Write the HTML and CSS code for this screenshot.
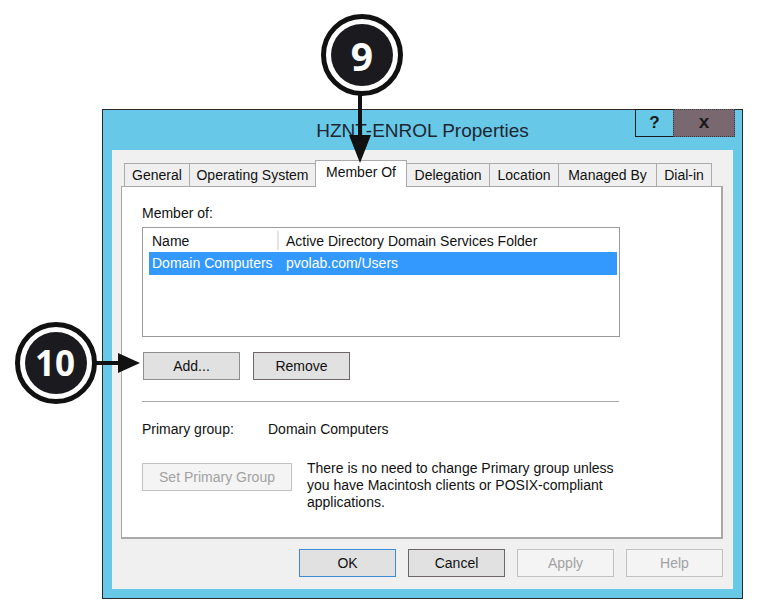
FILE: index.html
```html
<!DOCTYPE html>
<html>
<head>
<meta charset="utf-8">
<link rel="stylesheet" href="styles.css">
</head>
<body>
<div class="stage">
  <div class="window">
    <div class="titlebar">
      <div class="title">HZNT-ENROL Properties</div>
      <div class="caption-btns">
        <div class="cbtn help">?</div>
        <div class="cbtn close">x</div>
      </div>
    </div>
    <div class="client">
      <div class="tabs">
        <div class="tab w-general">General</div>
        <div class="tab w-os">Operating System</div>
        <div class="tab selected w-member">Member Of</div>
        <div class="tab w-deleg">Delegation</div>
        <div class="tab w-loc">Location</div>
        <div class="tab w-managed">Managed By</div>
        <div class="tab w-dial">Dial-in</div>
      </div>
      <div class="panel">
        <div class="label">Member of:</div>
        <div class="listbox">
          <div class="lrow header">
            <span class="hc1">Name</span><span class="hdiv"></span><span class="hc2">Active Directory Domain Services Folder</span>
          </div>
          <div class="lrow selrow">
            <span class="sc1">Domain Computers</span><span class="sc2">pvolab.com/Users</span>
          </div>
        </div>
        <div class="btnrow">
          <div class="btn add">Add...</div>
          <div class="btn dark">Remove</div>
        </div>
        <div class="sep"></div>
        <div class="pg"><span class="pg-label">Primary group:</span><span>Domain Computers</span></div>
        <div class="setrow">
          <div class="btn disabled setbtn">Set Primary Group</div>
          <p class="note">There is no need to change Primary group unless<br>you have Macintosh clients or POSIX-compliant<br>applications.</p>
        </div>
      </div>
      <div class="footer">
        <div class="btn fbtn default">OK</div>
        <div class="btn fbtn dark">Cancel</div>
        <div class="btn fbtn disabled">Apply</div>
        <div class="btn fbtn disabled">Help</div>
      </div>
    </div>
  </div>
  <svg class="callouts" width="760" height="610" viewBox="0 0 760 610">
    <line x1="360" y1="94" x2="360" y2="140" stroke="#111" stroke-width="4"/>
    <polygon points="349,135 371,135 360,163" fill="#111"/>
    <circle cx="362" cy="55" r="38.5" fill="#fff" stroke="#111" stroke-width="5"/>
    <circle cx="362" cy="55" r="31" fill="#1b1b1f"/>
    <text x="362" y="71" class="cnum" font-size="39">9</text>

    <line x1="95" y1="363" x2="122" y2="363" stroke="#111" stroke-width="4"/>
    <polygon points="118,353 118,373 140,363" fill="#111"/>
    <circle cx="56" cy="363" r="38.5" fill="#fff" stroke="#111" stroke-width="5"/>
    <circle cx="56" cy="363" r="31" fill="#1b1b1f"/>
    <text x="55" y="376" class="cnum" font-size="35">10</text>
  </svg>
</div>
</body>
</html>
```

FILE: styles.css
```css
html, body {
  margin: 0;
  padding: 0;
  background: #ffffff;
}

body {
  font-family: "Liberation Sans", Arial, sans-serif;
  font-size: 14px;
  color: #111;
}

.stage {
  position: relative;
  width: 760px;
  height: 610px;
  box-sizing: border-box;
  padding: 109px 0 0 102px;
  overflow: hidden;
}

.window {
  width: 641px;
  height: 490px;
  box-sizing: border-box;
  border: 1px solid #2a2a2a;
  background: #67c8e8;
  display: flex;
  flex-direction: column;
}

.titlebar {
  position: relative;
  height: 40px;
  display: flex;
  align-items: center;
  justify-content: center;
  flex: none;
}

.title {
  font-size: 19px;
  color: #1f2630;
  padding-top: 2px;
}

.caption-btns {
  position: absolute;
  top: -1px;
  right: 7px;
  display: flex;
}

.cbtn {
  height: 28px;
  box-sizing: border-box;
  display: flex;
  align-items: center;
  justify-content: center;
  font-weight: bold;
  color: #1a1a1a;
}

.help {
  width: 38px;
  border: 1px solid #1c1c1c;
  border-right: none;
  font-size: 17px;
}

.close {
  width: 62px;
  background: #7a6870;
  border: 1px dotted #3a3a3a;
  font-size: 19px;
  padding-bottom: 3px;
}

.client {
  flex: 1;
  margin: 0 9px 9px 9px;
  background: #f0f0f0;
  padding: 10px 10px 11px 9px;
  display: flex;
  flex-direction: column;
}

.tabs {
  height: 26px;
  display: flex;
  align-items: flex-end;
  padding-left: 3px;
  flex: none;
  position: relative;
  z-index: 3;
}

.tab {
  height: 23px;
  box-sizing: border-box;
  border: 1px solid #ababab;
  border-bottom: none;
  margin-right: -1px;
  background: #efefef;
  display: flex;
  align-items: center;
  justify-content: center;
  white-space: nowrap;
  padding-bottom: 1px;
}

.tab.selected {
  height: 27px;
  margin-bottom: -1px;
  background: #ffffff;
  position: relative;
  z-index: 4;
  padding-bottom: 5px;
}

.w-general { width: 66px; }
.w-os { width: 127px; }
.w-member { width: 92px; }
.w-deleg { width: 84px; }
.w-loc { width: 70px; }
.w-managed { width: 99px; }
.w-dial { width: 56px; }

.panel {
  height: 353px;
  box-sizing: border-box;
  background: #ffffff;
  border-style: solid;
  border-color: #a8a8a8;
  border-width: 1px 2px 2px 1px;
  padding: 18px 0 0 20px;
  position: relative;
  z-index: 1;
  flex: none;
}

.label {
  line-height: 17px;
}

.listbox {
  margin-top: 5px;
  width: 478px;
  height: 110px;
  box-sizing: border-box;
  border: 1px solid #9a9a9a;
  background: #fff;
}

.lrow {
  display: flex;
  white-space: nowrap;
}

.header {
  height: 24px;
  line-height: 26px;
  align-items: stretch;
}

.hc1 {
  width: 125px;
  padding-left: 9px;
}

.hdiv {
  width: 2px;
  margin: 3px 0 2px 0;
  background: #e4e4e4;
}

.hc2 {
  padding-left: 7px;
}

.selrow {
  margin-left: 6px;
  width: 468px;
  height: 23px;
  line-height: 23px;
  background: #3399ff;
  color: #ffffff;
}

.sc1 {
  width: 134px;
  padding-left: 3px;
}

.btnrow {
  margin-top: 15px;
  padding-left: 1px;
  display: flex;
  gap: 13px;
}

.btn {
  height: 28px;
  box-sizing: border-box;
  border: 1px solid #8e8e8e;
  background: #e1e1e1;
  display: flex;
  align-items: center;
  justify-content: center;
  white-space: nowrap;
  color: #111;
}

.add { width: 97px; }
.btnrow .dark { width: 97px; }

.dark {
  border-color: #6f666b;
}

.default {
  border-color: #3d8bd6;
}

.disabled {
  background: #f4f4f4;
  border-color: #c2c2c2;
  color: #a2a2a2;
}

.sep {
  margin-top: 21px;
  width: 477px;
  height: 1px;
  background: #a6a6a6;
}

.pg {
  margin-top: 19px;
  line-height: 17px;
  display: flex;
}

.pg-label {
  width: 126px;
}

.setrow {
  margin-top: 22px;
  display: flex;
  align-items: flex-start;
}

.setbtn {
  width: 150px;
  margin-top: 3px;
}

.note {
  margin: 0 0 0 15px;
  line-height: 17px;
  white-space: nowrap;
}

.footer {
  margin-top: 10px;
  display: flex;
  justify-content: flex-end;
  gap: 12px;
  flex: none;
}

.fbtn {
  width: 97px;
}

.callouts {
  position: absolute;
  left: 0;
  top: 0;
  z-index: 10;
  pointer-events: none;
}

.cnum {
  font-family: "Open Sans", "Liberation Sans", sans-serif;
  font-weight: bold;
  fill: #ffffff;
  text-anchor: middle;
}
```
